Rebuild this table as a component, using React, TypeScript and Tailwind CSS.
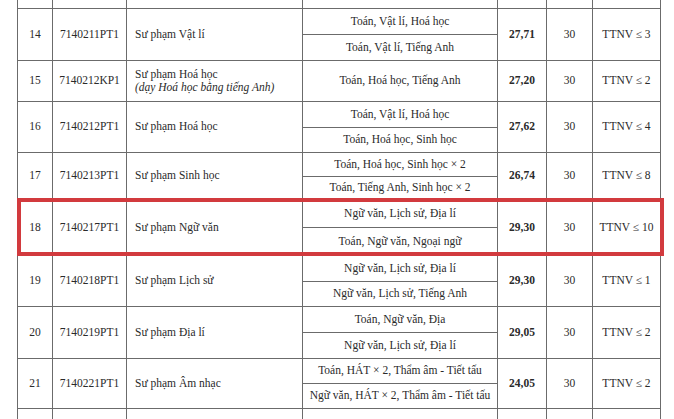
import React from "react";

type Row = {
  stt: string;
  code: string;
  name: React.ReactNode;
  combos: string[];
  score: string;
  quota: string;
  note: string;
  h: string;
  highlight?: boolean;
};

const rows: Row[] = [
  { stt: "14", code: "7140211PT1", name: "Sư phạm Vật lí", combos: ["Toán, Vật lí, Hoá học", "Toán, Vật lí, Tiếng Anh"], score: "27,71", quota: "30", note: "TTNV ≤ 3", h: "h-[52px]" },
  {
    stt: "15",
    code: "7140212KP1",
    name: (
      <div className="leading-[13px]">
        <div>Sư phạm Hoá học</div>
        <div className="italic">(dạy Hoá học bằng tiếng Anh)</div>
      </div>
    ),
    combos: ["Toán, Hoá học, Tiếng Anh"],
    score: "27,20",
    quota: "30",
    note: "TTNV ≤ 2",
    h: "h-[41px]",
  },
  { stt: "16", code: "7140212PT1", name: "Sư phạm Hoá học", combos: ["Toán, Vật lí, Hoá học", "Toán, Hoá học, Sinh học"], score: "27,62", quota: "30", note: "TTNV ≤ 4", h: "h-[51px]" },
  { stt: "17", code: "7140213PT1", name: "Sư phạm Sinh học", combos: ["Toán, Hoá học, Sinh học × 2", "Toán, Tiếng Anh, Sinh học × 2"], score: "26,74", quota: "30", note: "TTNV ≤ 8", h: "h-[47px]" },
  { stt: "18", code: "7140217PT1", name: "Sư phạm Ngữ văn", combos: ["Ngữ văn, Lịch sử, Địa lí", "Toán, Ngữ văn, Ngoại ngữ"], score: "29,30", quota: "30", note: "TTNV ≤ 10", h: "h-[56px]", highlight: true },
  { stt: "19", code: "7140218PT1", name: "Sư phạm Lịch sử", combos: ["Ngữ văn, Lịch sử, Địa lí", "Ngữ văn, Lịch sử, Tiếng Anh"], score: "29,30", quota: "30", note: "TTNV ≤ 1", h: "h-[51px]" },
  { stt: "20", code: "7140219PT1", name: "Sư phạm Địa lí", combos: ["Toán, Ngữ văn, Địa", "Ngữ văn, Lịch sử, Địa lí"], score: "29,05", quota: "30", note: "TTNV ≤ 2", h: "h-[52px]" },
  { stt: "21", code: "7140221PT1", name: "Sư phạm Âm nhạc", combos: ["Toán, HÁT × 2, Thẩm âm - Tiết tấu", "Ngữ văn, HÁT × 2, Thẩm âm - Tiết tấu"], score: "24,05", quota: "30", note: "TTNV ≤ 2", h: "h-[50px]" },
];

const grid = "grid grid-cols-[35px_74px_176px_195px_49px_46px_68px]";
const cell = "border-r border-[#6b6b6b] flex items-center";

function EmptyRow({ h }: { h: string }) {
  return (
    <div className={`${grid} ${h} border-l border-[#6b6b6b]`}>
      {[0, 1, 2, 3, 4, 5, 6].map((i) => (
        <div key={i} className="border-r border-[#6b6b6b]" />
      ))}
    </div>
  );
}

function TableRow({ r }: { r: Row }) {
  return (
    <div className={`relative ${grid} ${r.h} border-l border-b border-[#6b6b6b]`}>
      <div className={`${cell} justify-center`}>{r.stt}</div>
      <div className={`${cell} justify-center`}>{r.code}</div>
      <div className={`${cell} pl-2`}>{r.name}</div>
      <div className="border-r border-[#6b6b6b] flex flex-col">
        {r.combos.map((c, i) => (
          <div
            key={i}
            className={`flex-1 flex items-center justify-center whitespace-nowrap ${
              i < r.combos.length - 1 ? "border-b border-[#6b6b6b]" : ""
            }`}
          >
            {c}
          </div>
        ))}
      </div>
      <div className={`${cell} justify-center font-bold`}>{r.score}</div>
      <div className={`${cell} justify-center`}>{r.quota}</div>
      <div className={`${cell} justify-center`}>{r.note}</div>
      {r.highlight && (
        <div className="absolute left-[-1px] right-[-3px] top-[-2px] bottom-[-1px] border-4 border-[#d23a3e] pointer-events-none" />
      )}
    </div>
  );
}

export default function App() {
  return (
    <div className="w-[674px] h-[419px] overflow-hidden bg-white pl-[17px] text-[11.5px] text-[#2a2a2a] font-['Liberation_Serif','DejaVu_Serif',serif]">
      <div className="w-[644px]">
        <div className={`${grid} h-[9px] border-l border-b border-[#6b6b6b]`}>
          {[0, 1, 2, 3, 4, 5, 6].map((i) => (
            <div key={i} className="border-r border-[#6b6b6b]" />
          ))}
        </div>
        {rows.map((r) => (
          <TableRow key={r.stt} r={r} />
        ))}
        <EmptyRow h="h-[20px]" />
      </div>
    </div>
  );
}
